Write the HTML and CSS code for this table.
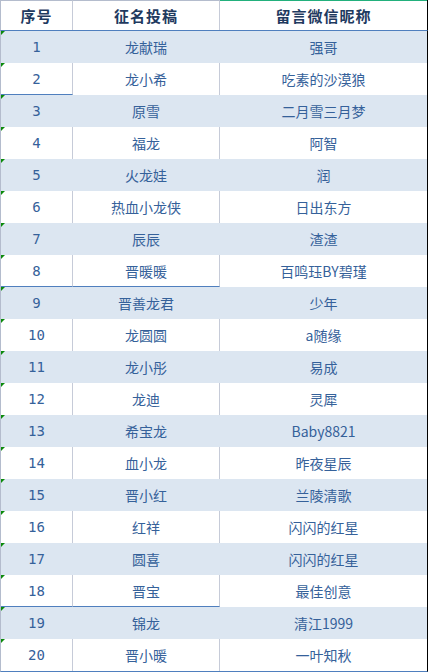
FILE: index.html
```html
<!DOCTYPE html>
<html lang="zh">
<head>
<meta charset="utf-8">
<link rel="stylesheet" href="styles.css">
</head>
<body>
<div class="sheet">
  <div class="row head">
    <div class="c c1">序号</div>
    <div class="c c2">征名投稿</div>
    <div class="c c3">留言微信昵称</div>
  </div>
  <div class="row odd"><div class="c c1 n">1</div><div class="c c2">龙献瑞</div><div class="c c3">强哥</div></div>
  <div class="row even lb1"><div class="c c1 n">2</div><div class="c c2">龙小希</div><div class="c c3">吃素的沙漠狼</div></div>
  <div class="row odd"><div class="c c1 n">3</div><div class="c c2">原雪</div><div class="c c3">二月雪三月梦</div></div>
  <div class="row even"><div class="c c1 n">4</div><div class="c c2">福龙</div><div class="c c3">阿智</div></div>
  <div class="row odd"><div class="c c1 n">5</div><div class="c c2">火龙娃</div><div class="c c3">润</div></div>
  <div class="row even"><div class="c c1 n">6</div><div class="c c2">热血小龙侠</div><div class="c c3">日出东方</div></div>
  <div class="row odd"><div class="c c1 n">7</div><div class="c c2">辰辰</div><div class="c c3">渣渣</div></div>
  <div class="row even lb2"><div class="c c1 n">8</div><div class="c c2">晋暖暖</div><div class="c c3">百鸣珏BY碧瑾</div></div>
  <div class="row odd"><div class="c c1 n">9</div><div class="c c2">晋善龙君</div><div class="c c3">少年</div></div>
  <div class="row even"><div class="c c1 n">10</div><div class="c c2">龙圆圆</div><div class="c c3">a随缘</div></div>
  <div class="row odd"><div class="c c1 n">11</div><div class="c c2">龙小彤</div><div class="c c3">易成</div></div>
  <div class="row even"><div class="c c1 n">12</div><div class="c c2">龙迪</div><div class="c c3">灵犀</div></div>
  <div class="row odd"><div class="c c1 n">13</div><div class="c c2">希宝龙</div><div class="c c3">Baby8821</div></div>
  <div class="row even"><div class="c c1 n">14</div><div class="c c2">血小龙</div><div class="c c3">昨夜星辰</div></div>
  <div class="row odd"><div class="c c1 n">15</div><div class="c c2">晋小红</div><div class="c c3">兰陵清歌</div></div>
  <div class="row even"><div class="c c1 n">16</div><div class="c c2">红祥</div><div class="c c3">闪闪的红星</div></div>
  <div class="row odd"><div class="c c1 n">17</div><div class="c c2">圆喜</div><div class="c c3">闪闪的红星</div></div>
  <div class="row even lb2"><div class="c c1 n">18</div><div class="c c2">晋宝</div><div class="c c3">最佳创意</div></div>
  <div class="row odd"><div class="c c1 n">19</div><div class="c c2">锦龙</div><div class="c c3">清江1999</div></div>
  <div class="row even last"><div class="c c1 n">20</div><div class="c c2">晋小暖</div><div class="c c3">一叶知秋</div></div>
</div>
</body>
</html>
```
FILE: styles.css
```css
html, body {
  margin: 0;
  padding: 0;
  background: #ffffff;
}
.sheet {
  width: 428px;
  display: flex;
  flex-direction: column;
  font-family: "Noto Sans CJK SC", "DejaVu Sans", sans-serif;
}
.row {
  display: flex;
  height: 32px;
  box-sizing: border-box;
  border-left: 1px solid #b4bccd;
  border-right: 1px solid #000000;
}
.c {
  display: flex;
  align-items: center;
  justify-content: center;
  box-sizing: border-box;
  height: 100%;
  font-size: 14px;
  color: #35619a;
  position: relative;
}
.c1 { width: 72px; border-right: 1px solid #c6cbd8; }
.c2 { width: 147px; border-right: 1px solid #c6cbd8; }
.c3 { width: 207px; }
.n { font-family: "DejaVu Sans Mono", "Liberation Mono", monospace; font-size: 14px; }
.n::before {
  content: "";
  position: absolute;
  left: 0;
  top: 0;
  border-top: 4px solid #0b8a0b;
  border-right: 4px solid transparent;
}
.head {
  height: 31px;
  border-bottom: 1px solid #4f7fbe;
}
.head .c {
  font-weight: 700;
  font-size: 15px;
  color: #1f3a5f;
  letter-spacing: 1px;
  border-top: 1px solid #b4bccd;
}
.head .c3 { border-top-color: #22b07c; }
.odd { background: #dce6f1; }
.odd .c1, .odd .c2 { border-right-color: #dce6f1; }
.lb1 .c1 { border-bottom: 1px solid #4f7fbe; }
.lb2 .c1, .lb2 .c2 { border-bottom: 1px solid #4f7fbe; }
.last { border-bottom: 1px solid #4f7fbe; height: 33px; }
```
